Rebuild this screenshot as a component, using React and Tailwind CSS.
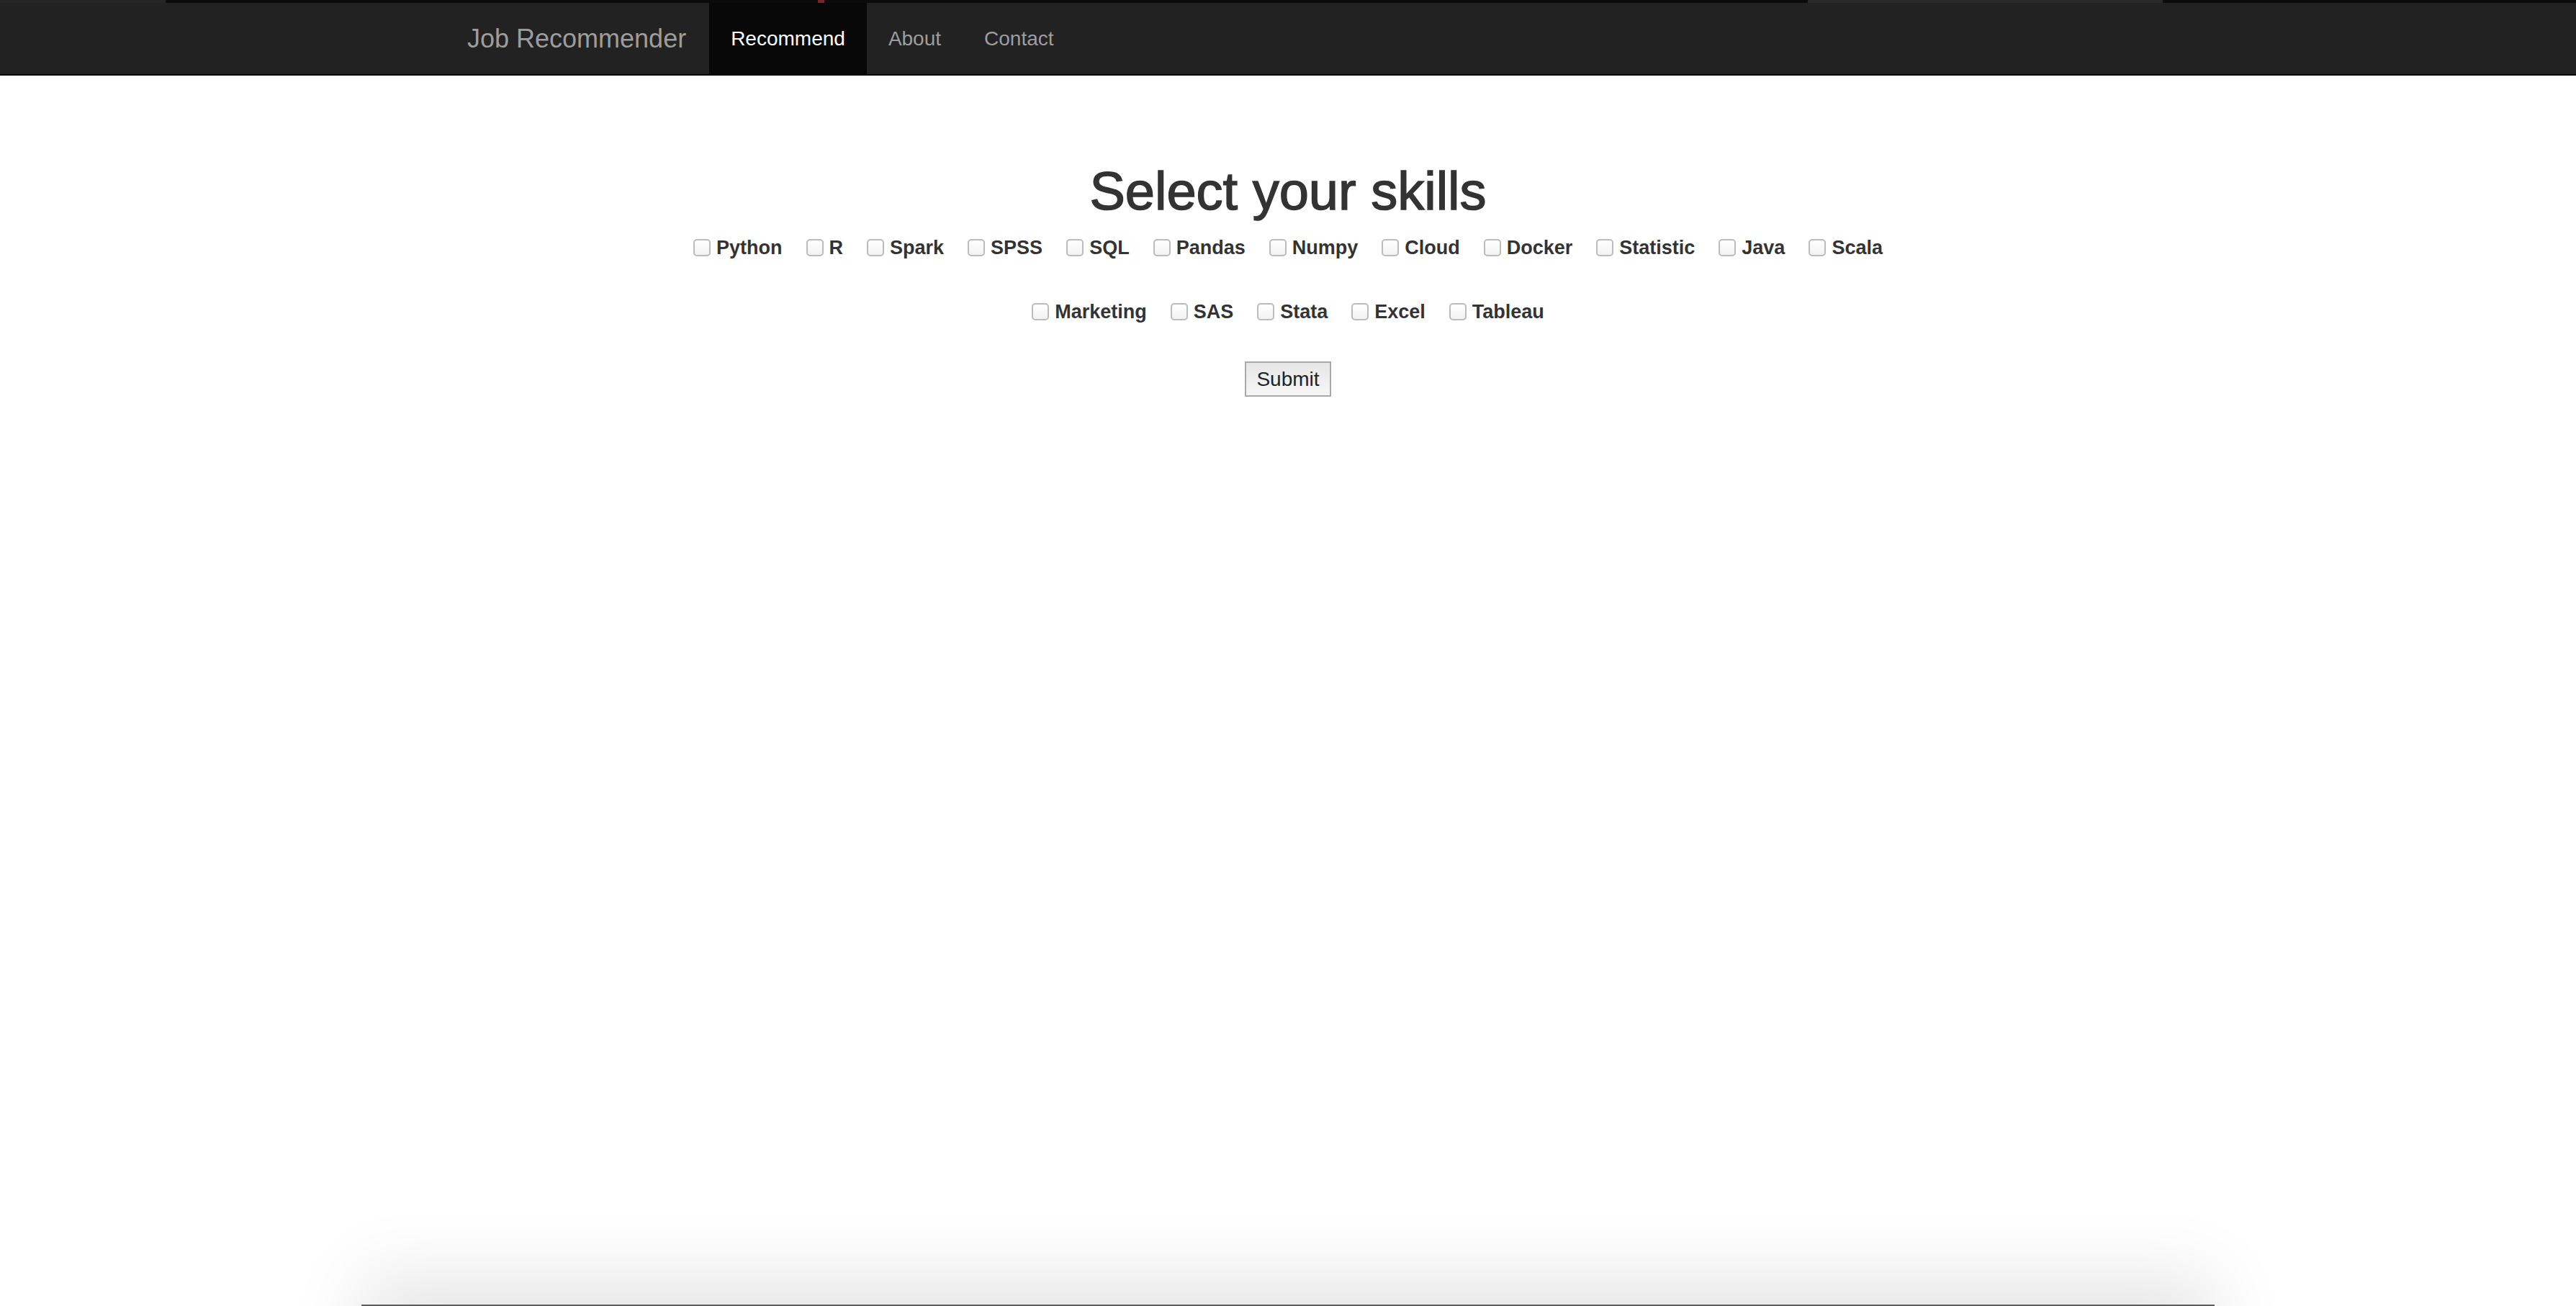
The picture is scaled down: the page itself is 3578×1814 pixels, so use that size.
import { useState } from "react";

// skills offered on the form, split over two centred rows like the original page
const ROW_ONE = ["Python", "R", "Spark", "SPSS", "SQL", "Pandas", "Numpy", "Cloud", "Docker", "Statistic", "Java", "Scala"];
const ROW_TWO = ["Marketing", "SAS", "Stata", "Excel", "Tableau"];

function Skill({ name, checked, onToggle }) {
  return (
    <label className="flex items-center gap-[8px] h-[40px] cursor-pointer">
      <input
        type="checkbox"
        checked={checked}
        onChange={onToggle}
        className="appearance-none w-[24px] h-[24px] rounded-[5px] border-2 border-[#bcbcbc] bg-gradient-to-b from-white to-[#f2f2f2] checked:bg-[#3b82f6] checked:border-[#3b82f6]"
      />
      <span className="text-[27px] leading-[40px] font-bold text-[#333]">{name}</span>
    </label>
  );
}

export default function App() {
  const [picked, setPicked] = useState({});

  const toggle = (name) => setPicked((p) => ({ ...p, [name]: !p[name] }));

  return (
    <div className="relative h-[1814px] w-full overflow-hidden bg-white font-['Liberation_Sans',Arial,sans-serif]">
      {/* thin strip above the navbar */}
      <div className="h-[4px] flex bg-[#0b0b0b]">
        <div className="w-[230px] bg-[#262626]" />
        <div className="w-[906px]" />
        <div className="w-[9px] bg-[#7a2330]" />
        <div className="w-[1366px]" />
        <div className="w-[493px] bg-[#2a2a2a]" />
      </div>

      {/* navbar */}
      <nav className="h-[101px] bg-[#222] border-b-2 border-[#080808]">
        <div className="w-[2340px] mx-auto px-[30px] h-full flex">
          <a className="flex items-center pr-[32px] text-[36px] text-[#9d9d9d]">Job Recommender</a>
          <ul className="flex">
            <li className="flex items-center px-[30px] bg-[#080808] text-[28px] text-white">Recommend</li>
            <li className="flex items-center px-[30px] text-[28px] text-[#9d9d9d]">About</li>
            <li className="flex items-center px-[30px] text-[28px] text-[#9d9d9d]">Contact</li>
          </ul>
        </div>
      </nav>

      <main className="flex flex-col items-center pt-[120px]">
        <h1 className="text-[74px] leading-[82px] font-medium text-[#333] [-webkit-text-stroke:1.5px_#333]">
          Select your skills
        </h1>

        <div className="mt-[17px] flex gap-[33px]">
          {ROW_ONE.map((s) => (
            <Skill key={s} name={s} checked={!!picked[s]} onToggle={() => toggle(s)} />
          ))}
        </div>

        <div className="mt-[49px] flex gap-[33px]">
          {ROW_TWO.map((s) => (
            <Skill key={s} name={s} checked={!!picked[s]} onToggle={() => toggle(s)} />
          ))}
        </div>

        <button className="mt-[49px] w-[120px] h-[49px] border-2 border-[#a9a9a9] bg-gradient-to-b from-[#e6e6e6] to-[#f6f6f6] text-[28px] text-[#222]">
          Submit
        </button>
      </main>

      {/* edge of a panel peeking in at the bottom, mostly cut off by the window */}
      <div className="absolute top-[1812px] left-[502px] w-[2574px] h-[200px] border-t-2 border-[#5c5c5c] bg-[#ececec] shadow-[0_-40px_100px_0_rgba(0,0,0,0.1)]" />
    </div>
  );
}
